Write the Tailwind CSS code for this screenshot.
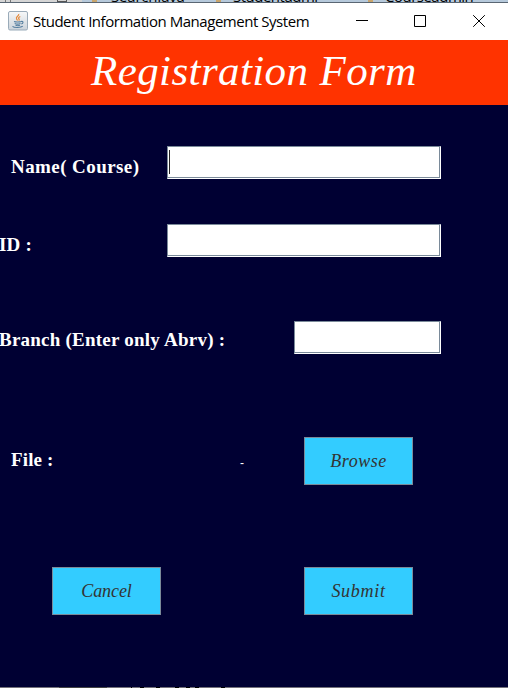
<!DOCTYPE html>
<html lang="en">
<head>
<meta charset="utf-8">
<title>Student Information Management System</title>
<script src="https://cdn.jsdelivr.net/npm/@tailwindcss/browser@4"></script>
</head>
<body class="w-[508px] h-[688px] overflow-hidden bg-[#000033] flex flex-col font-['Liberation_Serif',serif] text-white">
  <!-- sliver of the window behind -->
  <div class="h-[3px] shrink-0 overflow-hidden bg-[#b6c9db] border-b border-[#596673] flex font-['Open_Sans',sans-serif] text-[15px] leading-[20px] text-black">
    <div class="w-[82px] h-[3px] shrink-0 bg-[#d5d5d5] flex"><span class="ml-[5px] w-[6px] h-[3px] border-x border-[#777]"></span><span class="ml-[46px] w-[10px] h-[2px] border-b border-x border-[#555]"></span></div>
    <div class="w-[130px] shrink-0 flex"><i class="ml-[10px] mr-[14px] w-[5px] h-[2px] bg-[#c9a56c]"></i><span class="-mt-[14px] tracking-[-0.2px]">SearchJava</span></div>
    <div class="w-[153px] shrink-0 flex"><i class="ml-[4px] mr-[12px] w-[5px] h-[2px] bg-[#c9a56c]"></i><span class="-mt-[14px] tracking-[-0.5px]">Studentadmi</span></div>
    <div class="flex"><i class="ml-[3px] mr-[12px] w-[5px] h-[2px] bg-[#c9a56c]"></i><span class="-mt-[14px] tracking-[-0.5px]">Courseadmin</span></div>
  </div>

  <!-- title bar -->
  <header class="h-[37px] shrink-0 bg-white text-black flex items-center pl-[8px]">
    <svg class="w-[20px] h-[20px] shrink-0 -mt-[2px]" viewBox="0 0 20 20" fill="none">
      <defs><linearGradient id="g" x1="0" y1="0" x2="0" y2="1"><stop stop-color="#f7f8f9"/><stop offset="1" stop-color="#cbd3da"/></linearGradient></defs>
      <rect x=".5" y=".5" width="19" height="18.5" rx="1.5" fill="url(#g)" stroke="#9aabb9"/>
      <path d="M10.7 3c.7 2-3.2 2.700-2.200 4.700.3.700.9 1.100 1.100 1.800M12.300 5.500c-1.800.8-2.200 1.500-1.300 2.500.5.600.2 1.100-.2 1.600" stroke="#e58a3c" stroke-width="1.200"/>
      <path d="M6 10.500c1.500.7 5.500.7 7.300 0M6.700 12.600c1.600.6 4.300.6 5.800 0M7.500 14.300c1.400.5 3.200.5 4.500 0M13 10.500c2.700-.8 2.500 1.800.3 2.500M4.500 15.300c1.500 1.700 8.500 1.600 10.300-.1" stroke="#557e9f" stroke-width="1.100"/>
    </svg>
    <h1 class="ml-[5px] w-[276px] -mt-[2px] whitespace-nowrap font-['Open_Sans',sans-serif] text-[15px] leading-[20px] tracking-[-0.46px]">Student Information Management System</h1>
    <div class="ml-[47px] flex items-center -mt-px">
      <svg class="w-[12px] h-[12px]" viewBox="0 0 12 12"><path d="M0 5.500h12" stroke="#000"/></svg>
      <svg class="ml-[46px] w-[12px] h-[12px]" viewBox="0 0 12 12"><path d="M.5.500h11v11H.500z" fill="none" stroke="#000"/></svg>
      <svg class="ml-[47px] w-[12px] h-[12px]" viewBox="0 0 12 12"><path d="M.2.200l11.600 11.600M11.800.200L.200 11.800" stroke="#000"/></svg>
    </div>
  </header>

  <div class="h-[65px] shrink-0 bg-[#ff3300] pl-[91px] pt-[7px]">
    <h2 class="whitespace-nowrap italic text-[43px] leading-[48px] tracking-[0.4px]">Registration Form</h2>
  </div>

  <main class="h-[582px] shrink-0 pt-[41px] text-[19px] font-bold">
    <div class="flex h-[33px]">
      <label class="w-[156px] ml-[11px] mt-[10px] leading-[22px] tracking-[0.42px] whitespace-nowrap">Name( Course)</label>
      <div class="w-[274px] border border-t-[#7a8a99] border-l-[#7a8a99] border-b-white border-r-white bg-white">
        <div class="h-full border-b border-r border-[#7a8a99] pl-[1px] pt-[3px]"><div class="w-px h-[24px] bg-[#222]"></div></div>
      </div>
    </div>
    <div class="flex h-[33px] mt-[45px]">
      <label class="w-[167px] mt-[10px] leading-[22px] tracking-[0.2px] whitespace-nowrap"><span class="-ml-px">ID :</span></label>
      <div class="w-[274px] border border-t-[#7a8a99] border-l-[#7a8a99] border-b-white border-r-white bg-white">
        <div class="h-full border-b border-r border-[#7a8a99]"></div>
      </div>
    </div>
    <div class="flex h-[33px] mt-[64px]">
      <label class="w-[294px] mt-[8px] leading-[22px] tracking-[0.23px] whitespace-nowrap"><span class="-ml-px">Branch (Enter only Abrv) :</span></label>
      <div class="w-[147px] border border-t-[#7a8a99] border-l-[#7a8a99] border-b-white border-r-white bg-white">
        <div class="h-full border-b border-r border-[#7a8a99]"></div>
      </div>
    </div>
    <div class="flex h-[48px] mt-[83px]">
      <span class="w-[229px] ml-[11px] mt-[12px] leading-[22px] tracking-[0.15px]">File :</span>
      <span class="w-[64px] mt-[18px] font-normal font-['Liberation_Sans',sans-serif] text-[12px] leading-[16px]">-</span>
      <button class="w-[109px] h-[48px] bg-[#33ccff] border border-[#7a8a99] text-[#333333] font-normal italic text-[18px] leading-[22px] tracking-[0.5px]">Browse</button>
    </div>
    <div class="flex h-[48px] mt-[82px] pl-[52px] gap-[143px]">
      <button class="w-[109px] h-[48px] bg-[#33ccff] border border-[#7a8a99] text-[#333333] font-normal italic text-[18px] leading-[22px] tracking-[-0.1px]">Cancel</button>
      <button class="w-[109px] h-[48px] bg-[#33ccff] border border-[#7a8a99] text-[#333333] font-normal italic text-[18px] leading-[22px] tracking-[0.7px]">Submit</button>
    </div>
  </main>
  <div class="h-px shrink-0 bg-[#73717a] flex"><i class="ml-[59px] w-[48px] h-px bg-[#444]"></i><i class="ml-[15px] w-[10px] h-px border-r border-black"></i><i class="ml-[8px] w-[20px] h-px border-x-4 border-black"></i><i class="ml-[15px] w-[15px] h-px border-x-4 border-black"></i><i class="ml-[5px] w-[30px] h-px border-x-4 border-black"></i></div>
</body>
</html>
